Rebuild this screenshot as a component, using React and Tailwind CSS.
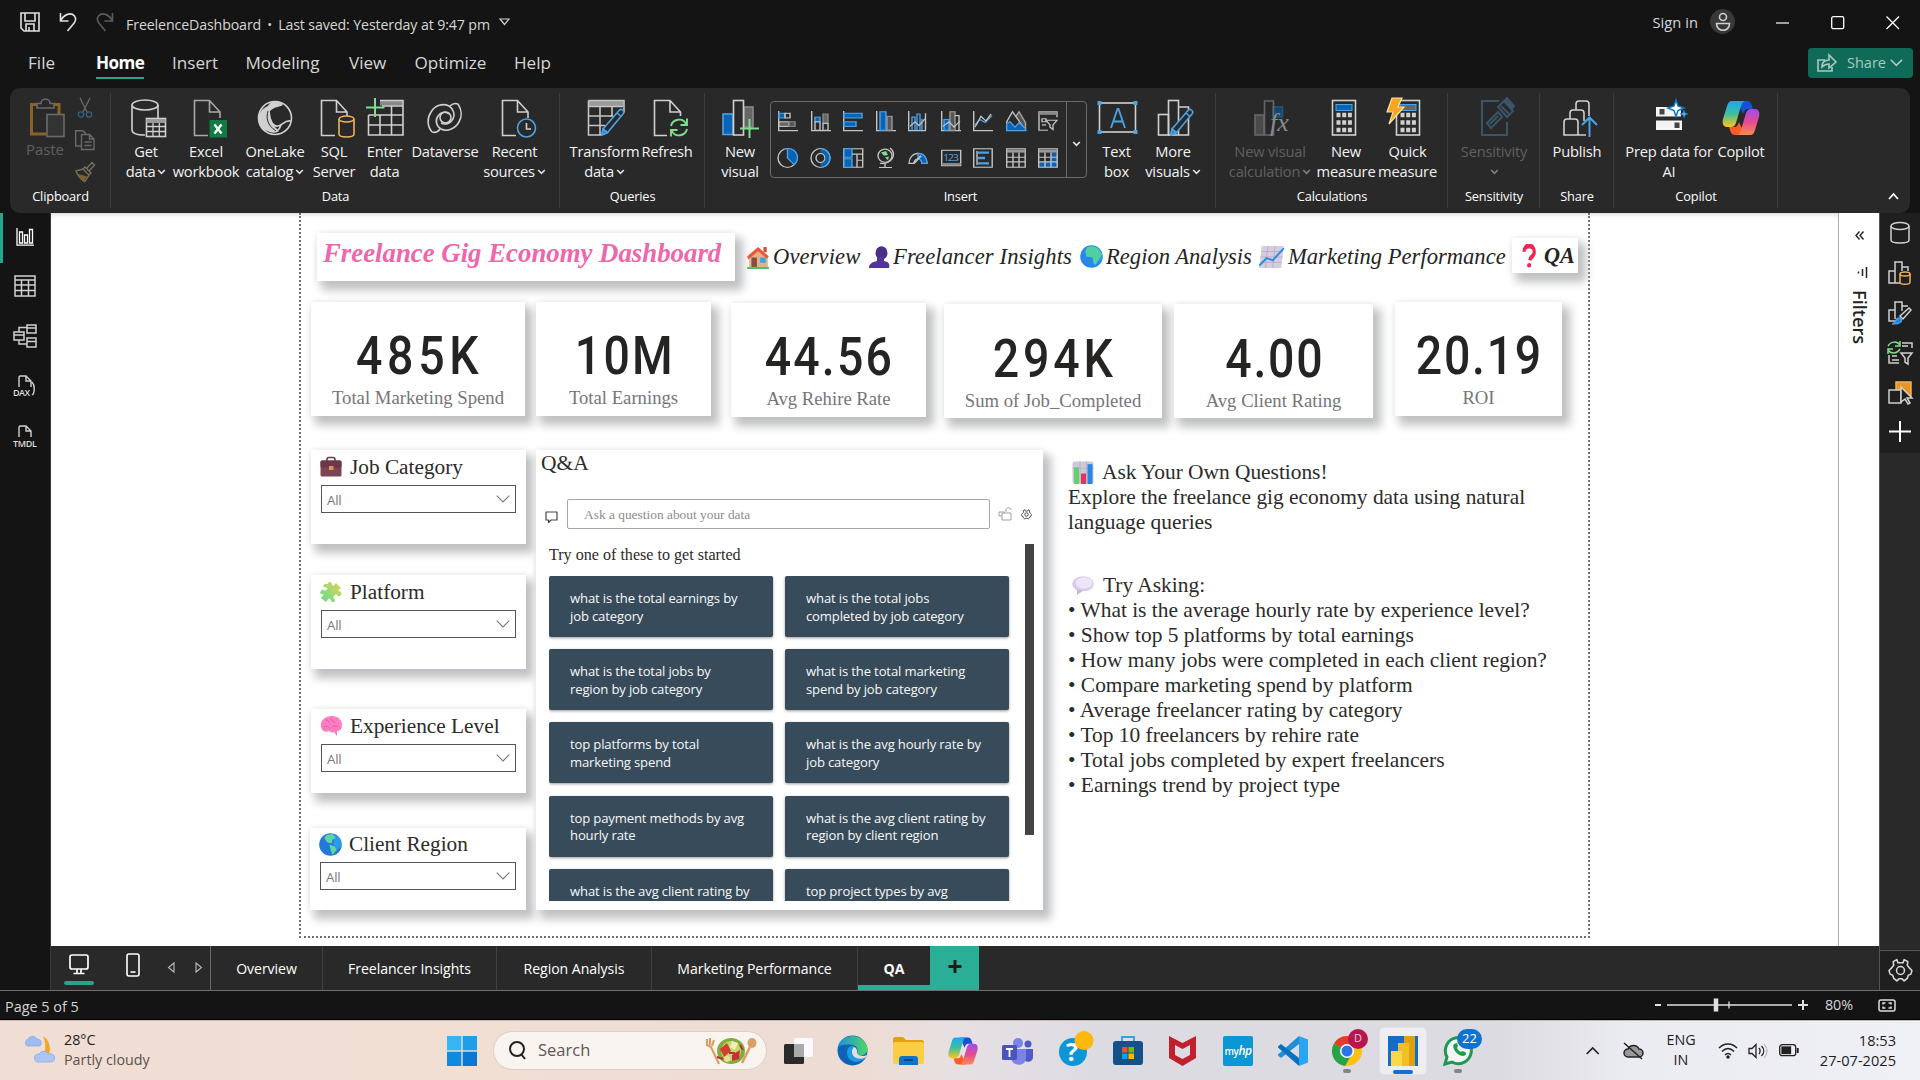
import React from "react";

const UI = "font-['Open_Sans','Noto_Sans',sans-serif]";
const SERIF = "font-['Liberation_Serif',serif]";
const SHADOW = "shadow-[6px_7px_9px_2px_#bfc0c3,0_0_6px_#ececec]";

/* ---------- generic svg wrapper ---------- */
function S({ w = 40, h = 40, vb, className = "", children, sw = 1.6, stroke = "#d0d0d0", fill = "none", par }) {
  return (
    <svg width={w} height={h} viewBox={vb || `0 0 ${w} ${h}`} preserveAspectRatio={par} className={`shrink-0 overflow-visible ${className}`} fill={fill} stroke={stroke} strokeWidth={sw}>
      {children}
    </svg>
  );
}

const Chev = ({ c = "#e8e8e8", s = 9 }) => (
  <svg width={s} height={s} viewBox="0 0 9 9" fill="none" stroke={c} strokeWidth="1.6" className="inline-block shrink-0">
    <path d="M1.2 3l3.3 3.4L7.8 3" />
  </svg>
);

/* ---------- ribbon icons ---------- */
const Pencil = () => (
  <g stroke="#4aa3e6" fill="#292929">
    <path d="M17 31L33 12.5a2.6 2.6 0 0 1 4 3.5L21.500 34.500l-5.500 2.500z" />
    <path d="M17 31l4.500 3.500-5.500 2.500z" fill="#1b86dc" />
    <path d="M31 15l4 3.500" />
  </g>
);
const PasteI = () => (
  <S stroke="#6a6a6a" className="ml-[4px]" h={42}>
    <path d="M10 6.500H4.500V36H19M27 6.500h5V16" stroke="#8a6226" strokeWidth="3" />
    <path d="M10 10h17V5.500h-4a4.500 4.500 0 0 0-9 0h-4z" fill="#292929" />
    <rect x="20" y="16.500" width="17" height="22" fill="#333" />
  </S>
);
const GetData = () => (
  <S className="ml-[3px]">
    <ellipse cx="17" cy="7" rx="13" ry="5" />
    <path d="M4 7v25c0 3 5 5 13 5M30 7v13" />
    <rect x="18.500" y="20.500" width="19" height="18" fill="#292929" />
    <path d="M18.500 23h19" strokeWidth="4" stroke="#9a9a9a" />
    <path d="M18.500 28.500h19M18.500 33.500h19M25 25v13.500M31.300 25v13.500" strokeWidth="1.300" />
  </S>
);
const Doc = ({ c }) => <path d="M31 20v-6L20.500 2.500H5.500v35H19M20.500 2.500V14H31" stroke={c} />;
const Excel = () => (
  <S className="ml-[5px]">
    <Doc c="#a8a8a8" />
    <rect x="20.500" y="22" width="17.500" height="17.500" fill="#107c41" stroke="none" />
    <path d="M25.500 26.500l7 9M32.500 26.500l-7 9" stroke="#fff" strokeWidth="2.300" />
  </S>
);
const OneLake = () => (
  <S>
    <circle cx="20" cy="20" r="16.500" />
    <path d="M13 8c2-5 11-7 15-1-4 2-9 2-13 6 0 9 3 15 9 20-1 1-3 2-5 1C9 34 3 29 3.500 20 4 14 8 10 13 8z" fill="#d0d0d0" stroke="none" />
    <path d="M14 13c0 9 4 16 9 15 5-1 6-6 13-5M13 32c7 5 12-1 13-5" />
    <path d="M13 13c-2 7-1 14 8 20" stroke="#292929" strokeWidth="1" />
  </S>
);
const Sql = () => (
  <S className="ml-[4px]">
    <Doc />
    <g stroke="#f0b15a" fill="#292929">
      <path d="M23 21v15c0 4 15 4 15 0V21" />
      <ellipse cx="30.500" cy="21" rx="7.500" ry="3" />
    </g>
  </S>
);
const Enter = () => (
  <S className="ml-[3px]">
    <path d="M14 5h22" strokeWidth="5" stroke="#8a8a8a" />
    <path d="M14 2.500h23v34.500H2.500V17M2.500 17H37M2.500 27H37M14 17v20M25.500 8v29M16 8h21" />
    <path d="M9 0v19M0 9.500h18.500" stroke="#7ddf8b" strokeWidth="2" />
  </S>
);
const Dataverse = () => (
  <S>
    <path d="M33 6c4 6 4 13 1 18-4 7-12 10-18 7-5-3-6-9-3-13 3-4 8-5 11-2" />
    <path d="M7 34c-5-6-5-14-1-20C10 7 18 5 24 8c5 3 6 9 4 13-3 5-8 6-12 4" />
    <path d="M33 6c-3-1-6 0-8 2M7 34c3 1 6 0 8-3" />
    <circle cx="20.500" cy="19.500" r="5.500" />
  </S>
);
const Recent = () => (
  <S className="ml-[4px]">
    <Doc />
    <circle cx="29.500" cy="30" r="9" fill="#292929" stroke="#4aa3e6" />
    <path d="M29.500 25v6h4.500" />
  </S>
);
const Transform = () => (
  <S className="ml-[2px]">
    <path d="M2.500 5.500h35" strokeWidth="5" stroke="#9a9a9a" />
    <path d="M2.500 2.500H38v12M2.500 2.500V37H16M2.500 8.500H37M2.500 18H27M2.500 27.500H19M14 9v28M26 9v10" stroke="#c4c4c4" />
    <Pencil />
  </S>
);
const Refresh = () => (
  <S className="ml-[5px]">
    <path d="M30.500 18v-4L20 2.500H4.500v35H17M20 2.500V14H30.500" />
    <g stroke="#7ddf8b" strokeWidth="1.900">
      <path d="M21 28c1.500-7 12-9 15-2M37 20.500V27h-6.500M37 31c-1.500 7-12 9-15 2M21 38.500V32h6.500" />
    </g>
  </S>
);
const NewVisual = () => (
  <S>
    <rect x="3" y="16" width="10" height="20.500" fill="#0a63b5" stroke="#4aa3e6" />
    <rect x="24" y="9" width="9" height="20" fill="#666" stroke="#8a8a8a" />
    <rect x="13.500" y="2.500" width="10" height="34.500" fill="#292929" />
    <path d="M29.500 21v19M20 30.500h19" stroke="#7ddf8b" strokeWidth="2" />
  </S>
);
const TextBox = () => (
  <S>
    <rect x="2.500" y="5" width="36" height="29" />
    <path d="M14 30l6.500-19h1L28 30M16.300 23.500h9.500" stroke="#4aa3e6" strokeWidth="1.800" />
    <g fill="#4aa3e6" stroke="none">
      <rect x="0.500" y="3" width="4" height="4" /><rect x="36.500" y="3" width="4" height="4" />
      <rect x="0.500" y="32" width="4" height="4" /><rect x="36.500" y="32" width="4" height="4" />
    </g>
  </S>
);
const MoreVisuals = () => (
  <S className="ml-[4px]">
    <rect x="3.500" y="16.500" width="10" height="20.500" />
    <rect x="13.500" y="2.500" width="10" height="34.500" />
    <path d="M23.500 9h10v28h-10" />
    <Pencil />
  </S>
);
const VisualCalc = () => (
  <S stroke="#666" className="ml-[2px]">
    <rect x="4" y="17" width="9" height="20" fill="#4a4a4a" />
    <rect x="22" y="9" width="9.500" height="10" fill="#17466b" stroke="#1d5583" />
    <path d="M13.500 37V3h9v34z" />
    <text x="19" y="33" className="font-['Liberation_Serif',serif] italic" fontSize="26" fill="#8a8a8a" stroke="none">fx</text>
  </S>
);
const Calc = ({ x = 0, c = "#0a63b5" }) => (
  <g transform={`translate(${x} 0)`}>
    <rect x="8.500" y="2.500" width="23" height="34.500" />
    <rect x="12" y="6.500" width="16" height="6" fill={c} stroke="#4aa3e6" strokeWidth="1" />
    <path d="M12.500 17h15.500M12.500 24.500h15.500M12.500 32h15.500" strokeWidth="4.500" strokeDasharray="4 1.700" />
  </g>
);
const NewMeasure = () => <S className="mr-[4px]"><Calc /></S>;
const Quick = () => (
  <S className="mr-[5px]">
    <Calc x={3} c="#666" />
    <path d="M7 0h10l-4 9h6L4 26l4-12H2z" fill="#f5a623" stroke="#ffe0a0" strokeWidth="1.200" />
  </S>
);
const Sens = () => (
  <S stroke="#3a5468" sw={2} className="ml-[6px]">
    <path d="M22 3H5v34h25V24" />
    <path d="M10 25L21 14l4 5-11 11zM13 26l8-8M21 9l6-6 9 10-6 6z" />
    <path d="M24 8l9 9M27 3l3-3 7 8-3 4" fill="#3a5468" />
  </S>
);
const Publish = () => (
  <S className="ml-[5px]">
    <path d="M4 37V24a3 3 0 0 1 3-3h8a3 3 0 0 1 3 3v13zM10 21v-6a3 3 0 0 1 3-3h8a3 3 0 0 1 3 3v8M16 12V6a3 3 0 0 1 3-3h7a3 3 0 0 1 3 3v12M18 37h8" />
    <path d="M29.500 39V20M22 27l7.500-7.500L37 27" stroke="#4aa3e6" strokeWidth="2" />
  </S>
);
const Prep = () => (
  <S stroke="none" className="ml-[2px]">
    <rect x="6" y="9" width="25" height="9.500" fill="#f4f4f4" />
    <rect x="6" y="22.500" width="26" height="9.500" fill="#f4f4f4" />
    <rect x="9.500" y="11" width="5" height="5.500" fill="#444" /><rect x="24.500" y="24.500" width="5" height="5.500" fill="#444" />
    <path d="M26 2l2 6 6 2-6 2.500-2 6-2-6-6-2.500 6-2z" fill="#fff" stroke="#0a78c8" strokeWidth="1.500" />
    <path d="M34 12l1 3 3 1-3 1-1 3-1-3-3-1 3-1z" fill="#5ab4f0" stroke="#0a78c8" strokeWidth=".6" />
  </S>
);
const CopilotLogo = ({ s = 40, id }) => (
  <svg width={s} height={s} viewBox="0 0 40 40" className="shrink-0">
    <defs>
      <linearGradient id={`${id}a`} x1="0" y1="0" x2="0" y2="1"><stop offset="0" stopColor="#1ca7f2" /><stop offset=".5" stopColor="#3fbf9c" /><stop offset="1" stopColor="#ffc61a" /></linearGradient>
      <linearGradient id={`${id}b`} x1="0" y1="0" x2="0" y2="1"><stop offset="0" stopColor="#a04df0" /><stop offset=".5" stopColor="#e44b94" /><stop offset="1" stopColor="#ff8a4c" /></linearGradient>
    </defs>
    <path d="M16 3h10c3 0 4 2 5 5l1 3h-5c-3 0-4 2-5 5z" fill="#1552d8" />
    <path d="M24 37H14c-3 0-4-2-5-5l-1-3h5c3 0 4-2 5-5z" fill="#ff5c2a" />
    <path d="M11 3h14c-3 0-4 2-5 5l-5 17c-1 3-3 4-5 4H6c-4 0-5-4-4-8L6 8c1-3 2-5 5-5z" fill={`url(#${id}a)`} />
    <path d="M29 37H15c3 0 4-2 5-5l5-17c1-3 3-4 5-4h4c4 0 5 4 4 8l-4 13c-1 3-2 5-5 5z" fill={`url(#${id}b)`} />
  </svg>
);

/* ---------- visual gallery ---------- */
const G = ({ children }) => <S w={20} h={20} vb="0 0 20 26" par="none" sw={1.400} stroke="#c4c4c4">{children}</S>;
const B = "#0a63b5", BL = "#4aa3e6";
const gallery = [
  <G key="1"><path d="M.7 0v25.500H20" /><rect x="1" y="3" width="6" height="6" fill={B} stroke={BL} /><rect x="7" y="3" width="5" height="6" /><rect x="1" y="14" width="10" height="6" fill="#666" /><rect x="11" y="14" width="6" height="6" fill="#555" stroke="#888" /></G>,
  <G key="2"><path d="M.7 0v25.500H20" /><rect x="4" y="8" width="5" height="6" fill={B} stroke={BL} /><rect x="4" y="14" width="5" height="11" /><rect x="12" y="4" width="5" height="12" fill="#666" stroke="#888" /><rect x="12" y="16" width="5" height="9" /></G>,
  <G key="3"><path d="M.7 0v25.500H20" /><rect x="1" y="3" width="18" height="6" fill={B} stroke={BL} /><rect x="1" y="14" width="12" height="6" fill={B} stroke={BL} /></G>,
  <G key="4"><path d="M.7 0v25.500H20" /><rect x="4" y="1" width="6" height="24" fill={B} stroke={BL} /><rect x="11" y="7" width="5" height="18" fill="#555" stroke="#999" /></G>,
  <G key="5"><path d="M.7 0v25.500H18M17.500 3v22" /><path d="M4 25V8h3v17M9 25V4h3v21M14 25V10" stroke={BL} /><path d="M2 20l5-6 4 5 6-9" /></G>,
  <G key="6"><path d="M.7 0v25.500H20" /><rect x="3" y="11" width="5" height="14" fill={B} stroke={BL} /><rect x="9" y="1" width="5" height="24" fill="#555" stroke="#999" /><path d="M14 6h4v19" /><path d="M2 20l6-6 5 7 6-8" /></G>,
  <G key="7"><path d="M.7 0v25.500H20" /><path d="M2 18l5-7 5 4 7-9" stroke={BL} /><path d="M2 21l6-14 5 6 5-9" /></G>,
  <G key="8"><path d="M1 25L13 1l6.500 14v10z" fill="#555" stroke="#aaa" /><path d="M.7 14L6.500 1l13 24H.7z" fill="#292929" /><path d="M.7 16L4 14l5 7 4-6 6.500 8v2.500H.7z" fill={B} stroke={BL} /></G>,
  <G key="9"><path d="M19 8V1H1v24h9" /><path d="M1 3h18" strokeWidth="4" stroke="#888" /><path d="M4 10h4v4H4zM4 18h4M8 12h11l-4 6v6l-3-3v-3z" fill="#292929" /></G>,
  <G key="10"><ellipse cx="9.500" cy="13" rx="9.500" ry="12.300" /><path d="M9.500 .7c10 0 13 14 6.500 20.800L9.500 13z" fill={B} stroke={BL} /></G>,
  <G key="11"><ellipse cx="9.500" cy="13" rx="9.500" ry="12.300" /><ellipse cx="9.500" cy="13" rx="4.500" ry="6" /><path d="M9.500 4a7 9 0 0 1 0 18" stroke={B} strokeWidth="4" /><path d="M9.500 .7a9.500 12.300 0 0 1 0 24.600" stroke={BL} /></G>,
  <G key="12"><rect x=".7" y="1" width="19" height="24" /><rect x="1" y="1" width="8" height="11" fill={B} stroke={BL} /><rect x="1" y="14" width="8" height="11" fill={B} stroke={BL} /><path d="M9 8h10M14 8v17M14 16h5" /></G>,
  <G key="13"><ellipse cx="9" cy="10" rx="7" ry="8.500" /><path d="M5 6l5-2 2 5-4 1zM9 12l4-1-1 5z" fill="#7ddf8b" stroke="none" /><path d="M14 0c6 6 4 17-5 20H4M9 20v5M3 25.300h13" /></G>,
  <G key="14"><path d="M1 20a9 13 0 0 1 18 0h-5a4 6 0 0 0-8 0z" /><path d="M10 7c6 0 9 6 9 13h-5c0-3-2-6-4-6z" fill={B} stroke={BL} /><path d="M6 20l7-10" strokeWidth="2" /></G>,
  <G key="15"><rect x=".7" y="3" width="19" height="20" /><path d="M.7 21h19" strokeWidth="3" stroke="#888" /><text x="2" y="16.500" fontSize="11" fill={BL} stroke="none" className="font-['Open_Sans',sans-serif]" textLength="16">123</text></G>,
  <G key="16"><rect x=".7" y="1" width="18.500" height="24" /><path d="M4 4v18" /><path d="M5 6h11M5 13h7M5 20h11" stroke={BL} strokeWidth="3" /></G>,
  <G key="17"><rect x=".7" y="1" width="18.500" height="24" /><path d="M.7 4h18.500" strokeWidth="4" stroke="#999" /><path d="M.7 12h18.500M.7 18h18.500M7 6v19M13 6v19" /></G>,
  <G key="18"><path d="M13 6h6v19H1v-7h12z" fill={B} stroke="none" /><rect x=".7" y="1" width="18.500" height="24" /><path d="M.7 4h18.500" strokeWidth="4" stroke="#999" /><path d="M.7 12h18.500M.7 18h18.500M7 6v19M13 6v19" /></G>,
];

function Item({ w, icon, lines, chev, dim }) {
  return (
    <div className={`flex flex-col items-center shrink-0 ${w}`}>
      <div className="h-[43px] flex items-start justify-center">{icon}</div>
      {lines.map((l, i) => (
        <div key={i} className={`h-[20px] leading-[20px] text-[14.7px] whitespace-nowrap flex items-center gap-[2px] tracking-[-0.200px] ${dim ? "text-[#606060]" : "text-[#f2f2f2]"}`}>
          {l}
          {chev && i === lines.length - 1 && <Chev c={dim ? "#808080" : "#e0e0e0"} />}
        </div>
      ))}
    </div>
  );
}
function Group({ w, label, pl = "", children }) {
  return (
    <div className={`relative h-[125px] shrink-0 flex flex-col ${w}`}>
      <div className={`flex h-[96px] pt-[10px] ${pl}`}>{children}</div>
      <div className="text-center text-[12.800px] leading-[24px] text-white tracking-[-0.150px]">{label}</div>
      <div className="absolute right-0 top-[5px] w-px h-[115px] bg-[#3d3d3d]" />
    </div>
  );
}

/* ---------- emoji drawings ---------- */
const E = ({ w = 22, h = 22, children, className = "" }) => (
  <svg width={w} height={h} viewBox="0 0 22 22" preserveAspectRatio="none" className={`shrink-0 ${className}`}>{children}</svg>
);
const House = () => (<E w={24} h={23}><rect x="1" y="20" width="20" height="2" fill="#4fc06a" /><path d="M3 9l9-7 8 8v10H3z" fill="#e8b087" /><path d="M1 10L11 1l10 9-2 2-8-7-9 8z" fill="#e8593a" /><rect x="16" y="1" width="3" height="5" fill="#d14b35" /><rect x="5" y="11" width="5" height="9" fill="#8a4f3a" /><rect x="13" y="11" width="5" height="5" fill="#2fa8e8" /></E>);
const Person = () => (<E><ellipse cx="13.500" cy="7" rx="6" ry="6.800" fill="#4a2e86" /><path d="M9 11h7v4c5 1 6 3 5 7H1c0-4 3-6 8-7z" fill="#53359a" /></E>);
const Globe = ({ alt }) => (<E w={23} h={23}><circle cx="11" cy="11" r="10.800" fill={alt ? "#2479d8" : "#2b86ea"} /><path d="M13 1c6 1 9 6 8.500 12L16 17c-3-4-1-8-3-16z" fill="#2fb0f5" opacity=".6" />{alt ? <path d="M7 2l6-1 3 4-3 1-1 4-4-1-3-4zM10 11l5 2 2 3-4 5-2-5z" fill="#5ed6a0" /> : <path d="M7 2l5-1 5 2 4 6-3 5-3 5-2-1-1-6-6-1-1-5z" fill="#4fd0a0" />}</E>);
const Trend = () => (<E w={27} h={24}><path d="M3 1h18l-2 20H1z" fill="#d6cce0" /><path d="M3 6h17M2 11h18M2 16h17M8 1L6 21M14 1l-2 20" stroke="#b9aac8" strokeWidth=".7" /><path d="M1 19l6-7 5 2 9-11" stroke="#2b8be0" strokeWidth="1.700" fill="none" /></E>);
const Question = () => (<E w={15} h={24}><path d="M3 7c0-7 15-7 15 0 0 5-6 4-6.500 8" stroke="#f0284f" strokeWidth="4.600" fill="none" /><ellipse cx="10.500" cy="19.500" rx="3" ry="2" fill="#f0284f" /></E>);
const Brief = () => (<E><path d="M7 5V3.500C7 2 8 1.500 9 1.500h4c1 0 2 .5 2 2V5" stroke="#6b3b3f" strokeWidth="1.600" fill="none" /><rect x=".5" y="4.500" width="21" height="16" rx="1.500" fill="#7a4555" /><rect x=".5" y="4.500" width="21" height="7" rx="1.500" fill="#6a3848" /><rect x="9" y="10" width="4.500" height="4" fill="#e88a5a" /></E>);
const Puzzle = () => (<E><defs><linearGradient id="pz" x1="1" y1="0" x2="0" y2="1"><stop offset="0" stopColor="#e0d75a" /><stop offset="1" stopColor="#5fdc8a" /></linearGradient></defs><path d="M8 3c0-3 4-2 4 0l1 2 3-3 5 5-3 3c3 0 5 3 2 5-2 1-3-1-4-2l-3 3 2 3c0 3-4 3-4 0l-2-2-3 4-5-4 3-4c-3 1-5-1-3-3 1-2 3-1 4 0l3-3-4-1c-2-2 1-4 4-3z" fill="url(#pz)" /></E>);
const Brain = () => (<E><path d="M1 12C0 5 5 1 12 1c6 0 10 4 10 9 0 4-2 6-5 6v5l-3-4c-2 1-4 0-5-1-4 2-7 0-8-4z" fill="#ff7ec2" /><path d="M6 5c2 0 3 1 3 3M11 3c0 3 3 3 4 5M4 12c3-2 5 0 6 2M12 12c2-2 5-1 6 0" stroke="#e0559f" fill="none" /></E>);
const Bars = () => (<E h={23}><rect x=".5" y=".5" width="21" height="21" rx="2" fill="#cfc8d8" /><path d="M0 7h22M8 0v22M14.500 0v22" stroke="#b3a9c0" strokeWidth=".6" /><rect x="2" y="6" width="5" height="16" fill="#5fd36b" /><rect x="9" y="12" width="5" height="10" fill="#e8325e" /><rect x="15.500" y="3" width="5" height="19" fill="#2b86e0" /></E>);
const Bubble = () => (<E h={19}><ellipse cx="11" cy="9" rx="10.800" ry="8.800" fill="#d8ccea" /><ellipse cx="12" cy="8" rx="8.500" ry="6.500" fill="#ece5f5" /><path d="M5 15l0 7 6-5z" fill="#c9b8e2" /></E>);

/* ---------- report pieces ---------- */
const cards = [
  { c: "w-[214px] h-[114px] mt-0", v: "485K", l: "Total Marketing Spend", p: "pt-[32px]", t: "tracking-[5.500px] pl-[4px]" },
  { c: "w-[175px] h-[114px] mt-0 ml-[11px]", v: "10M", l: "Total Earnings", p: "pt-[32px]", t: "tracking-[2.500px] pl-[3px]" },
  { c: "w-[195px] h-[114px] mt-px ml-[20px]", v: "44.56", l: "Avg Rehire Rate", p: "pt-[32px]", t: "tracking-[2.500px] pl-[2px]" },
  { c: "w-[218px] h-[114px] mt-[2px] ml-[18px]", v: "294K", l: "Sum of Job_Completed", p: "pt-[33px]", t: "tracking-[4.500px] pl-[4px]" },
  { c: "w-[199px] h-[114px] mt-[2px] ml-[12px]", v: "4.00", l: "Avg Client Rating", p: "pt-[33px]", t: "tracking-[2px] pl-[3px]" },
  { c: "w-[167px] h-[114px] mt-0 ml-[22px]", v: "20.19", l: "ROI", p: "pt-[32px]", t: "tracking-[2px] pl-[2px]" },
];
const slicers = [
  { c: "h-[94px]", n: "Job Category", i: <Brief /> },
  { c: "h-[94px] mt-[31px]", n: "Platform", i: <Puzzle /> },
  { c: "h-[84px] mt-[40px]", n: "Experience Level", i: <Brain /> },
  { c: "h-[82px] mt-[35px]", n: "Client Region", i: <Globe alt />, last: true },
];
const suggestions = [
  ["what is the total earnings by", "job category"], ["what is the total jobs", "completed by job category"],
  ["what is the total jobs by", "region by job category"], ["what is the total marketing", "spend by job category"],
  ["top platforms by total", "marketing spend"], ["what is the avg hourly rate by", "job category"],
  ["top payment methods by avg", "hourly rate"], ["what is the avg client rating by", "region by client region"],
  ["what is the avg client rating by", ""], ["top project types by avg", ""],
];
const asks = [
  "What is the average hourly rate by experience level?", "Show top 5 platforms by total earnings",
  "How many jobs were completed in each client region?", "Compare marketing spend by platform",
  "Average freelancer rating by category", "Top 10 freelancers by rehire rate",
  "Total jobs completed by expert freelancers", "Earnings trend by project type",
];

const Gear = ({ s = 24, c = "#d8d8d8", sw = 1.500 }) => (
  <svg width={s} height={s} viewBox="0 0 24 24" fill="none" stroke={c} strokeWidth={sw} strokeLinejoin="round" className="shrink-0">
    <path d="M9.500 4.500L8.500 1.500h0l-3.500 2 .5 3.500-1.800 2.200L1 12l1 3.500 2.500 1 1 3 3 2.500 2-2h3l2 2 3-2.500 1-3 2.500-1L23 12l-2.700-2.800L18.500 7l.5-3.500-3.500-2-1 3z" />
    <circle cx="12" cy="12" r="3.800" />
  </svg>
);

function TitleBar() {
  return (
    <div className="h-[40px] flex items-center text-[#d6d6d6]">
      <S w={20} h={20} className="ml-[20px] mt-[3px]" stroke="#e0e0e0"><path d="M1 1h18v18H4l-3-3zM5 1v8h10V1M6 19v-7h8v7M9 15v4" /></S>
      <S w={18} h={20} className="ml-[19px] mt-[3px]" stroke="#e0e0e0"><path d="M1.500 1v8h8M1.500 9C5 2 12 0 15.500 4c3 4 0 7-2 9l-5 6" /></S>
      <S w={18} h={20} className="ml-[19px] mt-[3px]" stroke="#5c5c5c"><path d="M16.500 1v8h-8M16.500 9C13 2 6 0 2.500 4c-3 4 0 7 2 9l5 6" /></S>
      <div className="ml-[12px] mt-[9px] text-[14.200px] whitespace-nowrap tracking-[-0.120px]">FreelenceDashboard</div>
      <div className="w-[17px] text-center mt-[9px] text-[13px]">•</div>
      <div className="mt-[9px] text-[14.200px] whitespace-nowrap tracking-[-0.120px] w-[213px]">Last saved: Yesterday at 9:47 pm</div>
      <S w={12} h={8} className="ml-[8px] mt-[3px]" sw={1.200}><path d="M1 1h9L5.500 6.500z" /></S>
      <div className="grow" />
      <div className="text-[14.700px] mt-[4px] tracking-[0.050px]">Sign in</div>
      <div className="ml-[12px] mt-[3px] size-[25px] rounded-full bg-[#383838] grid place-items-center">
        <S w={16} h={20} sw={1.600}><circle cx="8" cy="5" r="3.500" /><path d="M1.500 11.500h13c0 9-13 9-13 0z" /></S>
      </div>
      <S w={14} h={14} className="ml-[41px] mt-[5px]" stroke="#fff" sw={1.200}><path d="M0 7h13" /></S>
      <S w={14} h={14} className="ml-[41px] mt-[6px]" stroke="#fff" sw={1.300}><rect x=".7" y=".7" width="12" height="12" rx="1.500" /></S>
      <S w={14} h={14} className="ml-[41px] mr-[20px] mt-[6px]" stroke="#fff" sw={1.300}><path d="M.5.5l12.500 12.500M13 .5L.5 13" /></S>
    </div>
  );
}

const menus = [["File", "w-[68px]"], ["Home", "w-[76px]"], ["Insert", "w-[73.500px]"], ["Modeling", "w-[103.500px]"], ["View", "w-[65.500px]"], ["Optimize", "w-[99.500px]"], ["Help", "w-[60px]"]];
function MenuBar() {
  return (
    <div className="h-[48px] flex items-start pl-[28px] text-[#d6d6d6]">
      {menus.map(([m, w]) => (
        <div key={m} className={`${w} shrink-0 pt-[9px]`}>
          <div className={`inline-block whitespace-nowrap text-[17.100px] leading-[28px] ${m === "Home" ? "font-bold text-white border-b-2 border-[#25a58d] tracking-[-0.600px]" : ""}`}>{m}</div>
        </div>
      ))}
      <div className="grow" />
      <div className="mt-[8px] mr-[7px] w-[105px] h-[30px] rounded-[4px] bg-[#0f6b58] flex items-center text-[#a9c9c1] text-[14.500px]">
        <S w={20} h={18} className="ml-[9px]" stroke="#a9c9c1"><path d="M8 6H1v11h14v-4M5 13c0-5 3-7 7-7V1l7 7-7 6v-4c-3 0-5 1-7 3z" /></S>
        <span className="ml-[10px] mr-[4px]">Share</span>
        <S w={13} h={8} stroke="#a9c9c1"><path d="M.8.8l5.500 5.500L12 .8" /></S>
      </div>
    </div>
  );
}

function Ribbon() {
  return (
    <div className="mx-[10px] h-[125px] w-[1900px] rounded-[10px] bg-[#292929] flex relative z-10">
      <Group w="w-[101px]" label="Clipboard" pl="pl-[13px]">
        <div className="w-[44px] flex flex-col items-center">
          <PasteI />
          <div className="text-[14.800px] leading-[18px] text-[#606060]">Paste</div>
        </div>
        <div className="ml-[6px] w-[24px] flex flex-col items-center gap-[12px]">
          <S w={16} h={20} stroke="#6a6a6a" sw={1.300}><path d="M3 0l7 14M13 0L6 14" /><circle cx="4" cy="16.500" r="2.700" stroke="#33607f" /><circle cx="12" cy="16.500" r="2.700" stroke="#33607f" /></S>
          <S w={20} h={20} stroke="#6a6a6a" sw={1.400}><path d="M6 16H.7V.7H8l3 3M6.500 4.500h8l4.500 4.500v10.500H6.500zM14.500 4.500V9H19M9.500 12h7M9.500 15.500h7" /></S>
          <S w={20} h={20} stroke="#77715f" sw={1.400}><path d="M1 9l7-2 6 6-4 6.500C6 18 3 14 1 9zM8 7l2-2 6 6-2 2M12 6l5-5.500 2.500 2.500L14 9" /><path d="M3 12l9 2.500-2.500 4C6 17 5 16 3 12z" fill="#80602e" stroke="none" /></S>
        </div>
      </Group>
      <Group w="w-[449px]" label="Data" pl="pl-[6px]">
        <Item w="w-[58px]" icon={<GetData />} lines={["Get", "data"]} chev />
        <Item w="w-[62px]" icon={<Excel />} lines={["Excel", "workbook"]} />
        <Item w="w-[76px]" icon={<OneLake />} lines={["OneLake", "catalog"]} chev />
        <Item w="w-[42px]" icon={<Sql />} lines={["SQL", "Server"]} />
        <Item w="w-[59px]" icon={<Enter />} lines={["Enter", "data"]} />
        <Item w="w-[62px]" icon={<Dataverse />} lines={["Dataverse"]} />
        <Item w="w-[77px]" icon={<Recent />} lines={["Recent", "sources"]} chev />
      </Group>
      <Group w="w-[145px]" label="Queries" pl="pl-[4px]">
        <Item w="w-[81px]" icon={<Transform />} lines={["Transform", "data"]} chev />
        <Item w="w-[44px]" icon={<Refresh />} lines={["Refresh"]} />
      </Group>
      <Group w="w-[511px]" label="Insert" pl="pl-[7px]">
        <Item w="w-[56px]" icon={<NewVisual />} lines={["New", "visual"]} />
        <div className="ml-[2px] mt-[3px] w-[317px] h-[77px] shrink-0 rounded-[4px] border border-[#6a6a6a] flex">
          <div className="w-[295px] grid grid-cols-[repeat(9,20px)] auto-rows-[20px] gap-x-[12.500px] gap-y-[17px] pl-[7px] pt-[9px] content-start">{gallery}</div>
          <div className="border-l border-[#6a6a6a] grow grid place-items-center pt-[7px]"><Chev /></div>
        </div>
        <Item w="w-[59px]" icon={<TextBox />} lines={["Text", "box"]} />
        <Item w="w-[54px]" icon={<MoreVisuals />} lines={["More", "visuals"]} chev />
      </Group>
      <Group w="w-[232px]" label="Calculations" pl="pl-[10px]">
        <Item w="w-[88px]" icon={<VisualCalc />} lines={["New visual", "calculation"]} chev dim />
        <Item w="w-[64px]" icon={<NewMeasure />} lines={["New", "measure"]} />
        <Item w="w-[59px]" icon={<Quick />} lines={["Quick", "measure"]} />
      </Group>
      <Group w="w-[92px]" label="Sensitivity"><Item w="w-[92px]" icon={<Sens />} lines={["Sensitivity", ""]} chev dim /></Group>
      <Group w="w-[74px]" label="Share"><Item w="w-[74px]" icon={<Publish />} lines={["Publish"]} /></Group>
      <Group w="w-[164px]" label="Copilot" pl="pl-[10px]">
        <Item w="w-[90px]" icon={<Prep />} lines={["Prep data for", "AI"]} />
        <Item w="w-[54px]" icon={<CopilotLogo id="rb" />} lines={["Copilot"]} />
      </Group>
      <div className="grow flex justify-end items-end pb-[13px] pr-[11px]">
        <S w={11} h={8} stroke="#fff" sw={1.800}><path d="M1 7l4.500-5L10 7" /></S>
      </div>
    </div>
  );
}

function LeftRail() {
  return (
    <div className="w-[51px] shrink-0 bg-[#141414] border-r border-[#3a3a3a]">
      <div className="h-[50px] border-l-3 border-[#25a58d] flex items-center pl-[13px] pb-[2px]">
        <S w={18} h={18} stroke="#fff" sw={1.300}><path d="M1 0v17.200h17M3.500 15V4h3v11zM8.500 15V7h3v8zM13.500 15V1.500h3V15z" /></S>
      </div>
      <div className="pl-[13px] flex flex-col">
        <S w={24} h={22} className="mt-[12px]" sw={1.500}><path d="M2 1h20v20H2zM2 5h20M2 10h20M2 15.500h20M8.500 5v16M15.500 5v16" /></S>
        <S w={24} h={24} className="mt-[27px]" sw={1.500}><path d="M1 8h10v8H1zM1 11h10M14 1h9v8h-9zM14 4h9M14 14h9v9h-9zM14 17.500h9M6 8V3.500h8M6 16v4h8" /></S>
        <S w={24} h={24} className="mt-[27px]" sw={1.400}><path d="M6 12V2l1-1h6l5 5v6M13 1v5h5M19 7c3 3 3 11 0 13" /><text x="0" y="21" fontSize="9" textLength="17" fill="#ddd" stroke="none" className="font-['Open_Sans',sans-serif] font-semibold">DAX</text></S>
        <S w={24} h={24} className="mt-[26px]" sw={1.400}><path d="M6 12V2l1-1h6l5 5v6M13 1v5h5" /><text x="0" y="22" fontSize="9" textLength="24" fill="#ddd" stroke="none" className="font-['Open_Sans',sans-serif] font-semibold">TMDL</text></S>
      </div>
    </div>
  );
}

function NavItem({ icon, text, w, up, t = "" }) {
  return (
    <div className={`flex shrink-0 items-center ${w} ${up ? "mt-[-1px]" : ""}`}>
      {icon}
      <span className={`whitespace-nowrap italic text-[22.600px] leading-[26px] pl-[3px] ${t}`}>{text}</span>
    </div>
  );
}

function Slicer({ c, n, i, last }) {
  return (
    <div className={`bg-white ${SHADOW} ${c} ${last ? "w-[216px] ml-[-1px] pl-[9px]" : "w-[215px] pl-[9px]"}`}>
      <div className={`h-[35px] flex items-center ${last ? "pb-[3px]" : "pb-[1px]"}`}>
        <div className="w-[30px]">{i}</div>
        <div className="text-[21.300px] leading-[24px] text-[#2c2b2a] whitespace-nowrap">{n}</div>
      </div>
      <div className={`ml-px h-[28px] border border-[#555] flex items-center justify-between pl-[5px] pr-[5px] ${last ? "w-[196px] mt-[-1px]" : "w-[195px]"} ${UI}`}>
        <span className="text-[13.300px] text-[#777] mt-[3px] tracking-[-0.200px]">All</span>
        <S w={14} h={8} stroke="#777" sw={1.100}><path d="M.7.7l6.300 6.300L13.300.7" /></S>
      </div>
    </div>
  );
}

function QA() {
  return (
    <div className={`ml-[10px] w-[507px] h-[460px] bg-white ${SHADOW} flex flex-col overflow-visible`}>
      <div className="pl-[5px] pt-px text-[21.500px] leading-[24px] h-[49px] text-[#2c2b2a]">Q&amp;A</div>
      <div className="flex items-center h-[30px] pl-[9px]">
        <S w={13} h={12} className="mt-[6px]" stroke="#444" sw={1.200}><path d="M1 1h11v8H6l-2.500 2.500V9H1z" strokeLinejoin="round" /></S>
        <div className="ml-[9px] w-[423px] h-[30px] border border-[#a6a6a6] rounded-[2px] flex items-center pl-[16px] pt-[2px] text-[13.400px] text-[#8c8c8c]">Ask a question about your data</div>
        <S w={14} h={14} className="ml-[8px]" stroke="#a0a0a0" sw={1}><path d="M4 6h9v7H4zM4 9H1V5h6M8 5V3c0-3 5-3 5 0" /></S>
        <div className="ml-[9px]"><Gear s={11} c="#444" sw={2} /></div>
      </div>
      <div className="flex mt-[15px]">
        <div className="w-[489px]">
          <div className="pl-[13px] text-[16.100px] leading-[20px] h-[32px] pt-px text-[#2c2b2a]">Try one of these to get started</div>
          <div className={`ml-[13px] h-[325px] overflow-hidden grid grid-cols-[224px_224px] auto-rows-[61px] gap-x-[12px] gap-y-[12.200px] content-start ${UI}`}>
            {suggestions.map(([a, b], k) => (
              <div key={k} className="bg-[#374b5a] rounded-[2px] pl-[21px] pt-[14px] text-[13.100px] leading-[17.800px] text-[#f8f8f8] font-medium whitespace-nowrap shadow-[0_1px_3px_#9a9a9a] tracking-[-0.150px]">
                {a}<br />{b}
              </div>
            ))}
          </div>
        </div>
        <div className="w-[9px] h-[291px] bg-[#444]" />
      </div>
    </div>
  );
}

function Report() {
  return (
    <div className={`w-[1291px] ml-[248px] h-[725px] border-[#707070] border-dotted border-2 border-t-0 text-[#252423] ${SERIF}`}>
      <div className="flex pt-[20px] pl-[16px] h-[89px] items-start">
        <div className={`w-[418px] h-[48px] bg-white ${SHADOW} pl-[6px] pt-[6px] text-[26.800px] leading-[28px] font-bold italic text-[#ee66ab] whitespace-nowrap`}>Freelance Gig Economy Dashboard</div>
        <div className="flex pt-[11px] pl-[11px]">
          <NavItem w="w-[122px]" icon={<House />} text="Overview" t="tracking-[0.100px]" />
          <NavItem w="w-[212px]" icon={<Person />} text="Freelancer Insights" t="tracking-[0.120px]" />
          <NavItem w="w-[178px]" up icon={<Globe />} text="Region Analysis" />
          <NavItem w="w-[254px]" up icon={<Trend />} text="Marketing Performance" />
        </div>
        <div className={`mt-[5px] w-[66px] h-[35px] bg-white ${SHADOW} flex items-center pl-[10px]`}>
          <Question />
          <span className="pl-[7px] text-[22.200px] leading-[24px] font-bold italic">QA</span>
        </div>
      </div>
      <div className="flex items-start pl-[10px] h-[148px]">
        {cards.map((k) => (
          <div key={k.l} className={`bg-white shrink-0 text-center ${SHADOW} ${k.c} ${k.p}`}>
            <div className={`h-[53px] leading-[44px] text-[54px] font-medium font-['Roboto',sans-serif] scale-x-[.86] ${k.t}`}>{k.v}</div>
            <div className="text-[18.700px] leading-[22px] text-[#75757a] whitespace-nowrap">{k.l}</div>
          </div>
        ))}
      </div>
      <div className="flex items-start pl-[10px]">
        <div>{slicers.map((s) => <Slicer key={s.n} {...s} />)}</div>
        <QA />
        <div className="ml-[25px] text-[21.420px] leading-[25px] whitespace-nowrap pt-[10px] text-[#2c2b2a]">
          <div className="flex items-center pl-[4px] gap-[8px] tracking-[-0.020px]"><Bars />Ask Your Own Questions!</div>
          <div>Explore the freelance gig economy data using natural<br />language queries</div>
          <div className="flex items-center pl-[4px] gap-[9px] mt-[38px]"><Bubble />Try Asking:</div>
          {asks.map((a) => <div key={a}>• {a}</div>)}
        </div>
      </div>
    </div>
  );
}

function RightRail() {
  return (
    <div className="w-[41px] shrink-0 bg-[#292929] border-l border-[#555] flex flex-col">
      <div className="h-[240px] bg-[#1f1f1f] flex flex-col items-center pt-[8px] gap-[16px]">
        <S w={24} h={24} sw={1.500}><path d="M3 5v14c0 4 18 4 18 0V5" /><ellipse cx="12" cy="5" rx="9" ry="3.500" /></S>
        <S w={24} h={24} sw={1.500}><path d="M12 22H1V10h6M7 22V1h7v9M14 6h6v4" /><path d="M12 13v8c0 3 10 3 10 0v-8" stroke="#f0b15a" fill="#1f1f1f" /><ellipse cx="17" cy="13" rx="5" ry="2" stroke="#f0b15a" /></S>
        <S w={24} h={24} sw={1.500}><path d="M8 20H1V9h6M7 18V1h7v9M14 5h6" /><path d="M12 15l9-8 2 2-8 9z" /><path d="M4 23c4 0 3-7 8-6 3 2 2 6-8 6z" fill="#1b86dc" stroke="#4aa3e6" /></S>
        <S w={26} h={24} sw={1.500}><path d="M15 2h10v5M15 5h6M2 14v8h10M5 15h5M5 19h7M14 12h11l-4 5v6l-3-2v-4z" /><path d="M1 5c3-5 9-5 12-1M13 0v5H8M13 8c-3 5-9 5-12 1M1 13V8h5" stroke="#7ddf8b" /></S>
        <S w={24} h={24} sw={1.500}><rect x="8" y="1" width="15" height="14" fill="#e89423" stroke="#f0b15a" /><rect x="1" y="9" width="12" height="13" fill="#1f1f1f" /><path d="M13 6v15l4-3 3 5 2-1-3-5h5z" fill="#1f1f1f" /></S>
        <S w={24} h={24} stroke="#fff" sw={2}><path d="M12 0v21M1 10.500h22" /></S>
      </div>
      <div className="grow" />
      <div className="h-[40px] border-t border-[#555] bg-[#1f1f1f] grid place-items-center"><Gear s={25} /></div>
    </div>
  );
}

const tabs = [["Overview", "w-[112px]"], ["Freelancer Insights", "w-[174px]"], ["Region Analysis", "w-[155px]"], ["Marketing Performance", "w-[206px]"]];
function PageTabs() {
  return (
    <div className="h-[44px] bg-[#292929] flex text-white text-[14.100px] tracking-[-0.050px]">
      <div className="w-[160px] border-r border-[#6a6a6a] flex">
        <div className="ml-[13px] w-[30px] flex flex-col items-center pt-[8px]">
          <S w={20} h={22} stroke="#fff" sw={1.700}><rect x="1" y="1" width="18" height="14" rx="2" /><path d="M8 15v4M12 15v4M4.500 19.500h11" /></S>
          <div className="mt-[5px] w-[30px] h-[4px] rounded-full bg-[#25a58d]" />
        </div>
        <S w={14} h={24} className="ml-[32px] mt-[7px]" stroke="#fff" sw={1.600}><rect x="1" y="1" width="12" height="22" rx="2" /><path d="M4.500 19h5" /></S>
        <S w={8} h={11} className="ml-[27px] mt-[16px]" stroke="#bbb" sw={1.100}><path d="M7 1v9L1.500 5.500z" /></S>
        <S w={8} h={11} className="ml-[20px] mt-[16px]" stroke="#bbb" sw={1.100}><path d="M1 1v9l5.500-4.500z" /></S>
      </div>
      {tabs.map(([t, w]) => <div key={t} className={`${w} border-r border-[#404040] grid place-items-center pt-[2px] whitespace-nowrap`}>{t}</div>)}
      <div className="w-[72px] border-b-[5px] border-[#2aae95] grid place-items-center font-bold pt-[6px]">QA</div>
      <div className="w-[49px] bg-[#2aae95] grid place-items-center pb-[3px]"><S w={14} h={14} stroke="#1c1c1c" sw={3}><path d="M7 0v13M.5 6.500h13" /></S></div>
    </div>
  );
}

function StatusBar() {
  return (
    <div className="h-[30px] border-t border-[#707070] border-b-[1px] border-b-black bg-[#141414] flex items-center text-[#d6d6d6] text-[14.400px] relative">
      <div className="pl-[5px] pt-[3px] tracking-[0px]">Page 5 of 5</div>
      <div className="grow" />
      <S w={6} h={4} stroke="#e0e0e0" sw={2}><path d="M0 2h6" /></S>
      <S w={125} h={14} className="ml-[6px]" stroke="#e0e0e0" sw={1.300}><path d="M0 7h125M62 3.500v7" /><path d="M49 .5v13" strokeWidth="4.500" /></S>
      <S w={10} h={10} className="ml-[6px]" stroke="#e0e0e0" sw={2}><path d="M5 0v10M0 5h10" /></S>
      <div className="ml-[17px] w-[53px] text-[14.300px] tracking-[-0.050px]">80%</div>
      <S w={18} h={13} className="mr-[24px]" stroke="#ddd" sw={1.500}><rect x="1" y="1" width="16" height="11" rx="2" /><path d="M7.500 4H5v1.500M5 7.500V9h2.500M10.500 4H13v1.500M13 7.500V9h-2.500" /></S>
    </div>
  );
}

function Taskbar() {
  return (
    <div className="h-[60px] border-t border-[#c9b9b3] flex items-center text-[#1e1e1e] bg-[linear-gradient(90deg,#f0ddd4_0%,#f1dfd4_25%,#eddcd4_45%,#e6e0e3_50%,#dddbe2_57%,#dddbe2_78%,#ebebf2_85%,#eff0f5_100%)]">
      <S w={32} h={30} className="ml-[23px] mt-[-4px]" stroke="none"><path d="M20 2c12 8 8 28-8 26 10-4 13-14 8-26z" fill="#f5a524" /><path d="M4 12a4 4 0 0 1 1-7 5 5 0 0 1 9 0 4 4 0 0 1 3 7z" fill="#9dbdf2" stroke="#7fa3df" strokeWidth=".6" /><path d="M15 28a4 4 0 0 1 1-8 6 6 0 0 1 10 0 4 4 0 0 1 3 8z" fill="#a9c6f7" stroke="#7fa3df" strokeWidth=".6" /></S>
      <div className="ml-[9px] w-[383px] text-[14.300px] leading-[20px] mt-[-2px]"><div>28°C</div><div className="text-[#5a5250]">Partly cloudy</div></div>
      <S w={30} h={30} stroke="none"><path d="M0 0h14.300v14.300H0z" fill="#35b6f2" /><path d="M15.700 0H30v14.300H15.700z" fill="#1f9fe8" /><path d="M0 15.700h14.300V30H0z" fill="#108ae0" /><path d="M15.700 15.700H30V30H15.700z" fill="#0a78d4" /></S>
      <div className="ml-[16px] w-[274px] h-[39px] rounded-full bg-[#faf4f0] border border-[#dccdc5] flex items-center">
        <S w={19} h={20} className="ml-[13px]" stroke="#222" sw={2}><circle cx="10" cy="8" r="7" /><path d="M14.500 13.500L18 18" /></S>
        <span className="ml-[12px] text-[16.500px] text-[#5c5755]">Search</span>
        <svg width="52" height="28" viewBox="0 0 52 28" className="ml-auto mr-[9px]">
          <path d="M2 2v6l4 2 8 17M5 1v7M9 3l-2 6" stroke="#d9a066" strokeWidth="2.200" fill="none" />
          <ellipse cx="47" cy="6" rx="4.500" ry="5" fill="#d9a066" /><path d="M45 10l-8 16" stroke="#d9a066" strokeWidth="2.600" />
          <ellipse cx="26" cy="14" rx="14" ry="13" fill="#7fae3a" /><circle cx="26" cy="14" r="10" fill="#c6d96a" />
          <path d="M15 12l7-6 4 8-7 6z" fill="#d83a34" /><path d="M27 18l8-5-1 9-7 2z" fill="#c92f3a" /><path d="M27 4l6 2-3 7-5-3z" fill="#eef0c0" /><circle cx="22" cy="22" r="3" fill="#f0d9a0" /><path d="M12 20l6 2M35 8l3 5M24 16l6 0" stroke="#b8323c" strokeWidth="2" />
        </svg>
      </div>
      <S w={30} h={30} stroke="none" className="ml-[17px]"><rect x="10" y="2" width="19" height="19" rx="2" fill="#fafafa" /><rect x="0" y="8" width="20" height="20" rx="1.500" fill="#2b2b2b" /><path d="M10 8h10v13H10z" fill="#a9a9a9" /></S>
      <S w={31} h={31} stroke="none" className="ml-[23px]"><defs><linearGradient id="eg" x1="0" y1="0" x2="1" y2="0"><stop offset="0" stopColor="#1b8fe0" /><stop offset="1" stopColor="#4fd860" /></linearGradient></defs><circle cx="15.500" cy="15.500" r="15" fill="#0f62b8" /><path d="M1 12C4-3 28-3 30.500 14c0 6-7 8-11 6 2-3 2-9-4-10C9 9 3 10 1 12z" fill="url(#eg)" /><path d="M10 17c0-4 3-6 6-6 4 1 4 6 2 9 3 4 8 3 11 1-3 8-19 9-19-4z" fill="#1c9be6" /><path d="M15 15c-1 8 7 10 13 8l2-3c-4 2-9 1-10-2 1-2-1-6-3-6z" fill="#e6dcdc" /></S>
      <S w={31} h={28} stroke="none" className="ml-[25px]"><path d="M0 2c0-1 1-2 2-2h8l3 3h16c1 0 2 1 2 2v6H0z" fill="#e0a012" /><rect x="0" y="5" width="31" height="22" rx="2" fill="#fbcd45" /><path d="M6 28v-6c0-2 1-3 3-3h13c2 0 3 1 3 3v6z" fill="#1173c9" /><path d="M11 23h9" stroke="#0a4a8c" strokeWidth="2" /></S>
      <div className="ml-[23px]"><CopilotLogo s={32} id="tb" /></div>
      <S w={31} h={28} stroke="none" className="ml-[23px]"><circle cx="16" cy="6" r="5" fill="#7b83eb" /><circle cx="26" cy="7" r="3.500" fill="#5059c9" /><path d="M20 12h11v8c0 6-9 6-9 2z" fill="#5059c9" /><path d="M9 12h15v9c0 9-14 9-15 0z" fill="#7b83eb" /><rect x="0" y="8" width="15" height="15" rx="1.500" fill="#4b53bc" /><path d="M4 12h7M7.500 12v8" stroke="#fff" strokeWidth="1.800" /></S>
      <S w={36} h={36} stroke="none" className="ml-[26px] mt-[-4px]"><circle cx="14" cy="21" r="14" fill="#0c96d8" /><text x="7" y="30" fontSize="25" fill="#fff" className="font-['Open_Sans',sans-serif] font-bold">?</text><circle cx="25" cy="9.500" r="9.500" fill="#ffb90a" /></S>
      <S w={30} h={30} stroke="none" className="ml-[18px] mt-[-1px]"><path d="M9 7V2h12v5" stroke="#2aa8e8" strokeWidth="2" fill="none" /><rect x="0" y="6" width="30" height="24" rx="3" fill="#14508c" /><path d="M9 12h5.500v5.500H9z" fill="#f25022" /><path d="M15.500 12H21v5.500h-5.500z" fill="#7fba00" /><path d="M9 18.500h5.500V24H9z" fill="#00a4ef" /><path d="M15.500 18.500H21V24h-5.500z" fill="#ffb900" /></S>
      <S w={27} h={30} stroke="none" className="ml-[26px]"><path d="M0 0l13.500 7L27 0v22l-13.500 8L0 22zM6 9v10l7.500 4 7.500-4V9l-7.500 4z" fill="#c01f2e" fillRule="evenodd" /></S>
      <div className="ml-[27px] size-[30px] bg-[#0b96d6] rounded-[2px] grid place-items-center text-white text-[10px] font-semibold tracking-[-0.500px]"><span>my<i className="text-[12px]">hp</i></span></div>
      <S w={30} h={30} stroke="none" className="ml-[25px]"><path d="M21 8L3 22l-3-2.500v-1L21 0z" fill="#1f8fd8" /><path d="M21 22L3 8 0 10.500v1L21 30z" fill="#0a6fbe" /><path d="M21 0l9 3.500v23L21 30z" fill="#2ba5f0" /></S>
      <div className="relative ml-[24px] w-[36px] h-[46px]">
        <S w={30} h={30} stroke="none" className="mt-[8px]"><circle cx="15" cy="15" r="15" fill="#fbc116" /><path d="M15 15L2 7.500A15 15 0 0 1 28 7.500z" fill="#e33b2e" /><path d="M15 15L2 7.500A15 15 0 0 0 13 30l7-12z" fill="#25a348" /><circle cx="15" cy="15" r="7" fill="#fff" /><circle cx="15" cy="15" r="5.500" fill="#2a72e8" /></S>
        <div className="absolute right-0 top-[1px] size-[20px] rounded-full bg-[#b8164f] text-[#f3c8d8] text-[11px] grid place-items-center">D</div>
        <div className="absolute bottom-[1px] left-[11px] w-[8px] h-[4px] rounded-full bg-[#858388]" />
      </div>
      <div className="relative ml-[11px] w-[48px] h-[48px] rounded-[5px] bg-[#eeedf1] border border-[#e3e1e6]">
        <S w={30} h={30} stroke="none" className="mt-[8px] ml-[8px]"><path d="M0 0h30v30H0z" fill="#0f6fc6" /><path d="M16 0h11v30H16z" fill="#e0a010" /><path d="M10 7h11v23H10z" fill="#f2c025" /><path d="M3 15h11v15H3z" fill="#f9d949" /></S>
        <div className="absolute bottom-0 left-[13px] w-[20px] h-[4px] rounded-full bg-[#0f72d0]" />
      </div>
      <div className="relative ml-[16px] w-[39px] h-[46px]">
        <S w={31} h={31} stroke="#1b9a50" sw={3} className="mt-[7px]"><path d="M2 29l2-7a13 13 0 1 1 5 5z" fill="#f2f5f3" /><path d="M11 9c-3 3 3 12 9 12 3 0 4-3 2-4l-3-1-1 1c-2-1-3-2-4-4l1-2-1-3z" fill="#1b9a50" stroke="none" /></S>
        <div className="absolute right-0 top-[1px] w-[25px] h-[20px] rounded-full bg-[#0f72d0] text-white text-[13px] grid place-items-center">22</div>
        <div className="absolute bottom-[1px] left-[11px] w-[8px] h-[4px] rounded-full bg-[#858388]" />
      </div>
      <S w={13} h={8} className="ml-[104px]" stroke="#222" sw={1.700}><path d="M.7 7l6-6 6 6" /></S>
      <S w={20} h={16} className="ml-[24px]" stroke="#222" sw={1.500}><path d="M5 14a4 4 0 0 1 0-8 6 6 0 0 1 11 0 4 4 0 0 1 0 8z" fill="#999" /><path d="M1 0l18 16" /></S>
      <div className="ml-[22px] w-[32px] text-center text-[14.300px] leading-[20px] mt-[-2px]">ENG<br />IN</div>
      <S w={20} h={16} className="ml-[21px]" stroke="#222" sw={1.500}><path d="M1 5c5-5.500 13-5.500 18 0M4 8.500c4-4 8-4 12 0M7 12c2-2 4-2 6 0" /><circle cx="10" cy="14" r="1" fill="#222" /></S>
      <S w={20} h={16} className="ml-[10px]" stroke="#222" sw={1.300}><path d="M1 5.500h3L8 1.500v13l-4-4H1zM11 5c1.500 2 1.500 4 0 6M13.500 3c3 3 3 7 0 10" /><path d="M16 1c4 4 4 10 0 14" stroke="#bbb" /></S>
      <S w={20} h={13} className="ml-[11px]" stroke="#222" sw={1.300}><rect x=".7" y=".7" width="16" height="11" rx="2.500" /><rect x="3" y="3" width="8.500" height="6.500" fill="#222" /><path d="M18.700 4v5" strokeWidth="2" /></S>
      <div className="grow text-right pr-[24px] text-[14.600px] leading-[20px] mt-[-2px] whitespace-nowrap">18:53<br />27-07-2025</div>
    </div>
  );
}

export default function App() {
  return (
    <div className={`w-[1920px] h-[1080px] overflow-hidden bg-[#141414] flex flex-col ${UI}`}>
      <TitleBar />
      <MenuBar />
      <Ribbon />
      <div className="flex h-[777px] shrink-0">
        <LeftRail />
        <div className="w-[1828px] flex flex-col">
          <div className="h-[733px] flex bg-white">
            <div className="w-[1788px] border-r border-[#b0b0b0] shadow-[inset_0_4px_5px_-3px_#d0d0d0]"><Report /></div>
            <div className="grow flex flex-col items-center">
              <S w={9} h={9} className="mt-[18px]" stroke="#222" sw={1.400}><path d="M4.500 .5L1 4.500l3.500 4M8.500.5L5 4.500l3.500 4" /></S>
              <S w={11} h={11} className="mt-[27px] ml-[7px]" stroke="#222" sw={1.500}><path d="M9.500 0v11M5.500 2v7M1.500 4.500v2" /></S>
              <div className="[writing-mode:vertical-rl] font-semibold text-[18.200px] leading-[20px] mt-[12px] ml-[2px] text-[#222]">Filters</div>
            </div>
          </div>
          <PageTabs />
        </div>
        <RightRail />
      </div>
      <StatusBar />
      <Taskbar />
    </div>
  );
}
